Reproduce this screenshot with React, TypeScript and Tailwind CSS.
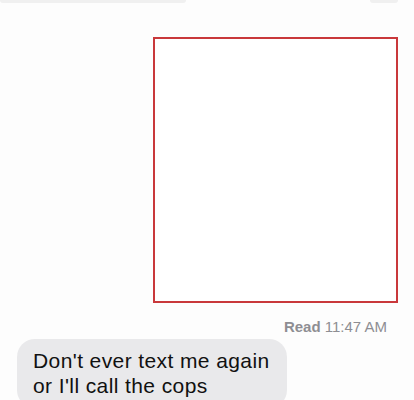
import React from "react";

export default function App() {
  return (
    <div className="w-[414px] h-[400px] bg-[#fdfdfd] overflow-hidden relative" style={{ fontFamily: '"Liberation Sans", Arial, sans-serif' }}>
      <div className="flex justify-between h-[4px]">
        <div className="w-[186px] h-[3px] bg-[#f0f0f0] rounded-b-[3px]" />
        <div className="w-[28px] h-[3px] bg-[#f0f0f0] rounded-b-[3px] mr-[16px]" />
      </div>
      <div className="flex justify-end pr-[16px] pt-[33px]">
        <div className="w-[245px] h-[266px] border-2 border-[#c9383b] bg-white" />
      </div>
      <div className="flex justify-end pr-[27px] mt-[15px]">
        <span className="text-[15px] leading-[18px] text-[#8e8e93]">
          <span className="font-bold">Read</span> 11:47 AM
        </span>
      </div>
      <div className="pl-[17px] mt-[3px]">
        <div className="w-[270px] bg-[#e9e9eb] rounded-[18px] pl-[16px] pt-[9px] pb-[10px] text-[#111] text-[21px] leading-[25px] tracking-[0.4px]">
          Don't ever text me again
          <br />
          or I'll call the cops
        </div>
      </div>
    </div>
  );
}
